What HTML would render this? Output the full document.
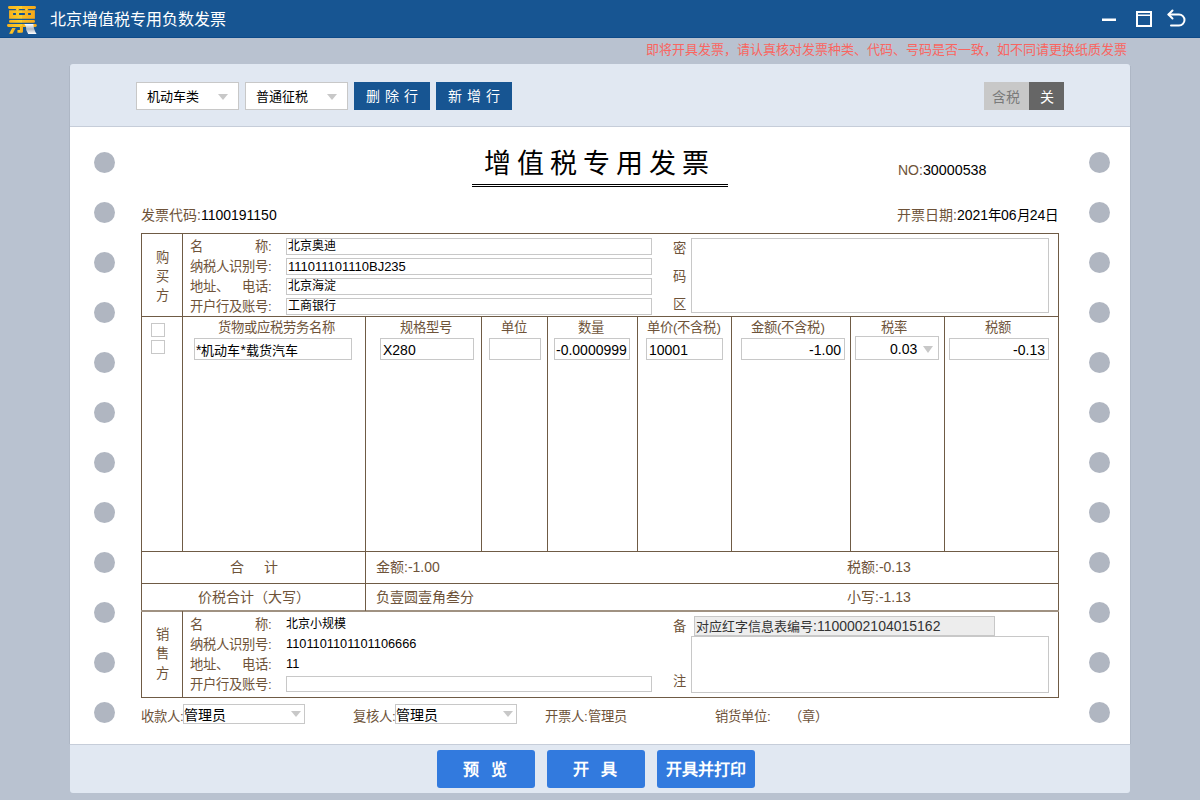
<!DOCTYPE html>
<html lang="zh-CN"><head><meta charset="utf-8">
<style>
*{box-sizing:border-box;margin:0;padding:0}
html,body{width:1200px;height:800px;overflow:hidden}
body{background:#b9c2d0;font-family:"Liberation Sans",sans-serif;position:relative;color:#000}
.a{position:absolute;white-space:nowrap}
.tb{left:0;top:0;width:1200px;height:38px;background:#175592;border-bottom:1px solid #0e4a88}
.ttl{left:50px;top:10px;font-size:16px;line-height:20px;color:#fff}
.notice{left:646px;top:41px;font-size:13px;line-height:17px;color:#f96560}
.panel{left:70px;top:64px;width:1060px;height:729px;background:#e1e8f2;border-radius:3px}
.paper{left:70px;top:126px;width:1060px;height:619px;background:#fff;border-top:1px solid #c6cdd9;border-bottom:1px solid #c6cdd9}
.sel{background:#fff;border:1px solid #c8c8c8;height:28px;font-size:13px;line-height:28px;padding-left:10px;color:#000}
.tri{width:0;height:0;border-left:5px solid transparent;border-right:5px solid transparent;border-top:6px solid #c8c8c8}
.btn{background:#175592;color:#fff;height:28px;font-size:14px;line-height:29px;text-align:center;letter-spacing:5px}
.hole{width:21px;height:21px;border-radius:50%;background:#b0b6c1}
.br{color:#6e5339}
.ln{background:#6f5b45}
.inp{border:1px solid #c8c8c8;background:#fff}
.lab{font-size:13.3px;line-height:18px;color:#6e5339}
.val{font-size:13px;line-height:16px;color:#000}
.fbtn{background:#327ade;color:#fff;height:38px;width:98px;border-radius:3px;font-size:16px;font-weight:bold;line-height:39px;text-align:center}
</style></head><body>
<div class="a tb"></div>
<svg class="a" style="left:0;top:0" width="44" height="38" viewBox="0 0 44 38">
 <defs><linearGradient id="lg" x1="0" y1="0" x2="1" y2="0"><stop offset="0" stop-color="#f8b21c"/><stop offset="0.5" stop-color="#fcd02c"/><stop offset="0.51" stop-color="#f9bb22"/><stop offset="1" stop-color="#f5a81a"/></linearGradient></defs>
 <g fill="url(#lg)">
  <rect x="8" y="6" width="28" height="2.9" rx="1.45"/>
  <path d="M9.1 10.3 H34.9 V18.7 H9.1 Z M13.1 12.9 V15.1 H15.9 V12.9 Z M19.1 12.9 V15.1 H24.9 V12.9 Z M28.1 12.9 V15.1 H30.9 V12.9 Z" fill-rule="evenodd"/>
  <rect x="15.9" y="8.5" width="3.2" height="2.2"/><rect x="24.9" y="8.5" width="3.2" height="2.2"/>
  <rect x="9" y="20.1" width="26" height="2.7" rx="1.35"/>
  <rect x="7" y="24.1" width="29.8" height="2.8" rx="1.4"/>
  <path d="M19.9 26 H23 V31.5 Q23 32.7 21.8 32.7 H17.4 V29.9 H19.9 Z"/>
  <path d="M12.2 28 H15.7 L12.6 33.7 H9.1 Z"/>
 </g>
 <defs><linearGradient id="pg" x1="0" y1="0" x2="0" y2="1"><stop offset="0" stop-color="#ffffff"/><stop offset="0.5" stop-color="#aab4c2"/><stop offset="1" stop-color="#ffffff"/></linearGradient></defs>
 <path d="M24.3 24.1 H33.4 Q33.6 30 36.6 33.9 H28.2 Q25.4 30.5 26 26.5 Z" fill="url(#pg)"/>
</svg>
<div class="a ttl">北京增值税专用负数发票</div>
<svg class="a" style="left:1090px;top:0" width="110" height="38" viewBox="0 0 110 38">
 <rect x="12" y="18.5" width="14" height="2.5" fill="#fff"/>
 <rect x="47" y="12" width="14" height="14" fill="none" stroke="#fff" stroke-width="2"/>
 <rect x="47" y="14.5" width="14" height="1.5" fill="#fff"/>
 <path d="M78.5 14.5 H89 A5.5 5.5 0 0 1 89 25.5 H81" fill="none" stroke="#fff" stroke-width="2" stroke-linecap="round"/>
 <path d="M82.5 10.5 L78.5 14.5 L82.5 18.5" fill="none" stroke="#fff" stroke-width="2" stroke-linecap="round" stroke-linejoin="round"/>
</svg>
<div class="a notice">即将开具发票，请认真核对发票种类、代码、号码是否一致，如不同请更换纸质发票</div>
<div class="a" style="left:69px;top:66px;width:1062px;height:678px;background:#aeb7c5"></div>
<div class="a panel"></div>
<div class="a paper"></div>

<!-- toolbar -->
<div class="a sel" style="left:136px;top:82px;width:103px">机动车类</div>
<div class="a tri" style="left:218px;top:94px"></div>
<div class="a sel" style="left:245px;top:82px;width:103px">普通征税</div>
<div class="a tri" style="left:327px;top:94px"></div>
<div class="a btn" style="left:354px;top:82px;width:76px;padding-left:5px">删除行</div>
<div class="a btn" style="left:436px;top:82px;width:76px;padding-left:5px">新增行</div>
<div class="a" style="left:984px;top:82px;width:45px;height:28px;background:#c8c8c8;color:#7a7a7a;font-size:14px;line-height:30px;text-align:center;padding-right:2px">含税</div>
<div class="a" style="left:1029px;top:82px;width:35px;height:28px;background:#666;color:#fff;font-size:14px;line-height:30px;text-align:center">关</div>

<!-- holes -->
<div class="a hole" style="left:94px;top:152px"></div><div class="a hole" style="left:1089px;top:152px"></div>
<div class="a hole" style="left:94px;top:202px"></div><div class="a hole" style="left:1089px;top:202px"></div>
<div class="a hole" style="left:94px;top:252px"></div><div class="a hole" style="left:1089px;top:252px"></div>
<div class="a hole" style="left:94px;top:302px"></div><div class="a hole" style="left:1089px;top:302px"></div>
<div class="a hole" style="left:94px;top:352px"></div><div class="a hole" style="left:1089px;top:352px"></div>
<div class="a hole" style="left:94px;top:402px"></div><div class="a hole" style="left:1089px;top:402px"></div>
<div class="a hole" style="left:94px;top:452px"></div><div class="a hole" style="left:1089px;top:452px"></div>
<div class="a hole" style="left:94px;top:502px"></div><div class="a hole" style="left:1089px;top:502px"></div>
<div class="a hole" style="left:94px;top:552px"></div><div class="a hole" style="left:1089px;top:552px"></div>
<div class="a hole" style="left:94px;top:602px"></div><div class="a hole" style="left:1089px;top:602px"></div>
<div class="a hole" style="left:94px;top:652px"></div><div class="a hole" style="left:1089px;top:652px"></div>
<div class="a hole" style="left:94px;top:702px"></div><div class="a hole" style="left:1089px;top:702px"></div>


<!-- title -->
<div class="a" style="left:484px;top:147px;font-size:27px;line-height:34px;letter-spacing:6px;color:#000">增值税专用发票</div>
<div class="a" style="left:472px;top:184px;width:256px;height:1px;background:#000"></div>
<div class="a" style="left:472px;top:186px;width:256px;height:1px;background:#000"></div>
<div class="a" style="left:898px;top:161px;font-size:14px;line-height:18px"><span class="br">NO:</span><span style="font-size:14.3px">30000538</span></div>
<div class="a" style="left:141px;top:206px;font-size:14px;line-height:18px"><span class="br">发票代码:</span>1100191150</div>
<div class="a" style="left:897px;top:206px;font-size:14px;line-height:18px"><span class="br">开票日期:</span>2021<span style="font-size:13.5px">年</span>06<span style="font-size:13.5px">月</span>24<span style="font-size:13.5px">日</span></div>

<!-- table lines -->
<div class="a ln" style="left:141px;top:233px;width:918px;height:1px"></div>
<div class="a ln" style="left:141px;top:697px;width:918px;height:1px"></div>
<div class="a ln" style="left:141px;top:233px;width:1px;height:465px"></div>
<div class="a ln" style="left:1058px;top:233px;width:1px;height:465px"></div>
<div class="a ln" style="left:141px;top:316px;width:918px;height:1px"></div>
<div class="a ln" style="left:141px;top:551px;width:918px;height:1px"></div>
<div class="a ln" style="left:141px;top:583px;width:918px;height:1px"></div>
<div class="a" style="left:141px;top:610px;width:918px;height:2px;background:#a09282"></div>
<div class="a ln" style="left:182px;top:233px;width:1px;height:318px"></div>
<div class="a ln" style="left:182px;top:611px;width:1px;height:86px"></div>
<div class="a ln" style="left:365px;top:316px;width:1px;height:295px"></div>
<div class="a ln" style="left:481px;top:316px;width:1px;height:235px"></div>
<div class="a ln" style="left:547px;top:316px;width:1px;height:235px"></div>
<div class="a ln" style="left:637px;top:316px;width:1px;height:235px"></div>
<div class="a ln" style="left:731px;top:316px;width:1px;height:235px"></div>
<div class="a ln" style="left:850px;top:316px;width:1px;height:235px"></div>
<div class="a ln" style="left:944px;top:316px;width:1px;height:235px"></div>

<!-- buyer -->
<div class="a lab" style="left:156px;top:249px">购</div><div class="a lab" style="left:156px;top:268px">买</div><div class="a lab" style="left:156px;top:287px">方</div>
<div class="a lab" style="left:190px;top:238px">名</div><div class="a lab" style="left:255px;top:238px">称:</div>
<div class="a lab" style="left:190px;top:258px">纳税人识别号:</div>
<div class="a lab" style="left:190px;top:278px">地址、</div><div class="a lab" style="left:242px;top:278px">电话:</div>
<div class="a lab" style="left:190px;top:298px">开户行及账号:</div>
<div class="a inp val" style="left:286px;top:238px;width:366px;height:17px;line-height:15px;padding-left:1px;font-size:12px">北京奥迪</div>
<div class="a inp val" style="left:286px;top:258px;width:366px;height:17px;line-height:15px;padding-left:1px">111011101110BJ235</div>
<div class="a inp val" style="left:286px;top:278px;width:366px;height:17px;line-height:15px;padding-left:1px;font-size:12px">北京海淀</div>
<div class="a inp val" style="left:286px;top:298px;width:366px;height:17px;line-height:15px;padding-left:1px;font-size:12px">工商银行</div>
<div class="a lab" style="left:673px;top:240px">密</div>
<div class="a lab" style="left:673px;top:268px">码</div>
<div class="a lab" style="left:673px;top:296px">区</div>
<div class="a inp" style="left:691px;top:238px;width:358px;height:75px"></div>

<!-- items header -->
<div class="a inp" style="left:151px;top:323px;width:14px;height:14px"></div>
<div class="a inp" style="left:151px;top:340px;width:14px;height:14px"></div>
<div class="a lab" style="left:218px;top:319px">货物或应税劳务名称</div>
<div class="a lab" style="left:400px;top:319px">规格型号</div>
<div class="a lab" style="left:501px;top:319px">单位</div>
<div class="a lab" style="left:578px;top:319px">数量</div>
<div class="a lab" style="left:647px;top:319px">单价(不含税)</div>
<div class="a lab" style="left:751px;top:319px">金额(不含税)</div>
<div class="a lab" style="left:881px;top:319px">税率</div>
<div class="a lab" style="left:985px;top:319px">税额</div>
<div class="a inp" style="left:194px;top:338px;width:158px;height:22px;font-size:14px;line-height:22px;padding-left:1px">*<span style="font-size:13px">机动车</span>*<span style="font-size:13px">载货汽车</span></div>
<div class="a inp" style="left:380px;top:338px;width:94px;height:22px;font-size:14px;line-height:22px;padding-left:2px">X280</div>
<div class="a inp" style="left:489px;top:338px;width:52px;height:22px"></div>
<div class="a inp" style="left:554px;top:338px;width:76px;height:22px;font-size:14px;line-height:22px;padding-left:1px;overflow:hidden">-0.0000999</div>
<div class="a inp" style="left:646px;top:338px;width:77px;height:22px;font-size:14px;line-height:22px;padding-left:2px">10001</div>
<div class="a inp" style="left:741px;top:338px;width:104px;height:22px;font-size:14px;line-height:22px;padding-right:3px;text-align:right">-1.00</div>
<div class="a inp" style="left:855px;top:336px;width:84px;height:24px;font-size:14px;line-height:24px;padding-left:34px">0.03</div>
<div class="a tri" style="left:923px;top:346px;border-top-width:7px"></div>
<div class="a inp" style="left:949px;top:338px;width:100px;height:22px;font-size:14px;line-height:22px;padding-right:3px;text-align:right">-0.13</div>

<!-- totals -->
<div class="a lab" style="left:230px;top:558px;font-size:14px;line-height:18px">合</div><div class="a lab" style="left:264px;top:558px;font-size:14px;line-height:18px">计</div>
<div class="a lab" style="left:376px;top:558px;font-size:14px;line-height:18px">金额:-1.00</div>
<div class="a lab" style="left:847px;top:558px;font-size:14px;line-height:18px">税额:-0.13</div>
<div class="a lab" style="left:198px;top:588px;font-size:14px;line-height:18px">价税合计（大写）</div>
<div class="a lab" style="left:376px;top:588px;font-size:14px;line-height:18px">负壹圆壹角叁分</div>
<div class="a lab" style="left:847px;top:588px;font-size:14px;line-height:18px">小写:-1.13</div>

<!-- seller -->
<div class="a lab" style="left:156px;top:626px">销</div><div class="a lab" style="left:156px;top:645px">售</div><div class="a lab" style="left:156px;top:665px">方</div>
<div class="a lab" style="left:190px;top:616px">名</div><div class="a lab" style="left:255px;top:616px">称:</div>
<div class="a lab" style="left:190px;top:636px">纳税人识别号:</div>
<div class="a lab" style="left:190px;top:656px">地址、</div><div class="a lab" style="left:242px;top:656px">电话:</div>
<div class="a lab" style="left:190px;top:676px">开户行及账号:</div>
<div class="a val" style="left:286px;top:616px;font-size:12px">北京小规模</div>
<div class="a val" style="left:286px;top:636px;font-size:12.8px">1101101101101106666</div>
<div class="a val" style="left:286px;top:656px;font-size:12.8px">11</div>
<div class="a inp" style="left:286px;top:676px;width:366px;height:16px"></div>
<div class="a lab" style="left:673px;top:618px">备</div>
<div class="a lab" style="left:673px;top:673px">注</div>
<div class="a" style="left:694px;top:616px;width:301px;height:20px;background:#ededed;border:1px solid #c8c8c8;font-size:14px;line-height:18px;color:#333;padding-left:1px"><span style="font-size:13px">对应红字信息表编号</span>:1100002104015162</div>
<div class="a inp" style="left:691px;top:636px;width:358px;height:57px"></div>

<!-- footer -->
<div class="a lab" style="left:141px;top:708px">收款人:</div>
<div class="a sel" style="left:183px;top:704px;width:122px;height:20px;line-height:20px;padding-left:0;font-size:14px">管理员</div>
<div class="a tri" style="left:291px;top:711px"></div>
<div class="a lab" style="left:353px;top:708px">复核人:</div>
<div class="a sel" style="left:395px;top:704px;width:122px;height:20px;line-height:20px;padding-left:0;font-size:14px">管理员</div>
<div class="a tri" style="left:503px;top:711px"></div>
<div class="a lab" style="left:545px;top:708px">开票人:管理员</div>
<div class="a lab" style="left:715px;top:708px">销货单位:</div><div class="a lab" style="left:789px;top:708px">（章）</div>

<div class="a fbtn" style="left:437px;top:750px;letter-spacing:12px;padding-left:10px">预览</div>
<div class="a fbtn" style="left:547px;top:750px;letter-spacing:12px;padding-left:10px">开具</div>
<div class="a fbtn" style="left:657px;top:750px">开具并打印</div>
</body></html>
